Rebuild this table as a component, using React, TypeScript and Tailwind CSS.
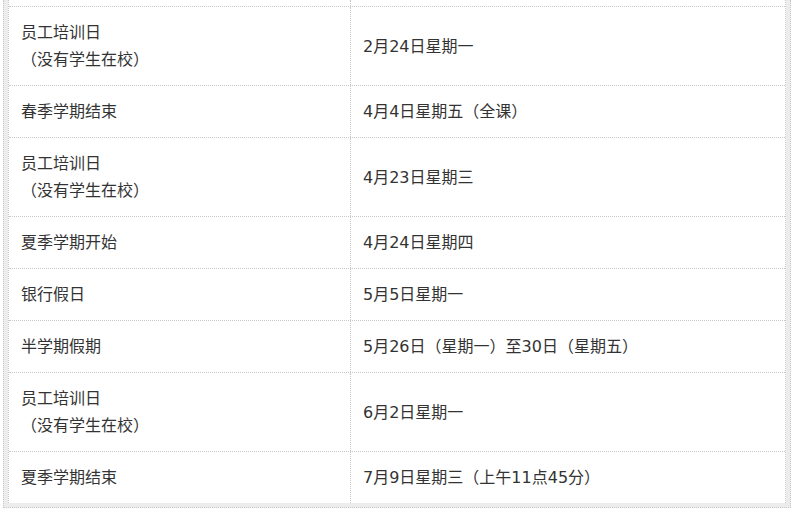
const rows: { name: string[]; date: string }[] = [
  { name: ['员工培训日', '（没有学生在校）'], date: '2月24日星期一' },
  { name: ['春季学期结束'], date: '4月4日星期五（全课）' },
  { name: ['员工培训日', '（没有学生在校）'], date: '4月23日星期三' },
  { name: ['夏季学期开始'], date: '4月24日星期四' },
  { name: ['银行假日'], date: '5月5日星期一' },
  { name: ['半学期假期'], date: '5月26日（星期一）至30日（星期五）' },
  { name: ['员工培训日', '（没有学生在校）'], date: '6月2日星期一' },
  { name: ['夏季学期结束'], date: '7月9日星期三（上午11点45分）' },
]

export default function App() {
  return (
    <div
      className="w-[795px] h-[514px] bg-white overflow-hidden text-[#333] text-[16px] leading-[27px]"
      style={{ fontFamily: '"DejaVu Sans", "Noto Sans CJK SC", sans-serif' }}
    >
      <div className="ml-[3px] w-[788px] bg-[#ececec] border-x border-b border-dotted border-[#c8c8c8] px-[4px] pb-[4px]">
        <div className="bg-white border-x border-dotted border-[#c8c8c8]">
          {/* tail of the row scrolled out above */}
          <div className="grid grid-cols-[342px_1fr] h-[6px]">
            <div className="border-r border-dotted border-[#c8c8c8]" />
            <div />
          </div>
          {rows.map((r, i) => (
            <div
              key={i}
              className="grid grid-cols-[342px_1fr] border-t border-dotted border-[#c8c8c8]"
            >
              <div className="border-r border-dotted border-[#c8c8c8] px-[12px] py-[12px]">
                {r.name.map((l, j) => (
                  <div key={j}>{l}</div>
                ))}
              </div>
              <div className="flex items-center px-[12px] py-[12px]">{r.date}</div>
            </div>
          ))}
        </div>
      </div>
    </div>
  )
}
